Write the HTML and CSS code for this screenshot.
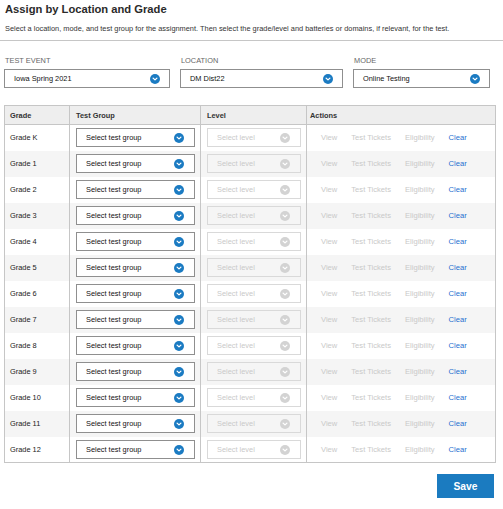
FILE: index.html
```html
<!DOCTYPE html>
<html lang="en">
<head>
<meta charset="utf-8">
<title>Assign by Location and Grade</title>
<link rel="stylesheet" href="styles.css">
</head>
<body>
<div class="page">
  <div class="header">
    <h1 class="title">Assign by Location and Grade</h1>
    <p class="intro">Select a location, mode, and test group for the assignment. Then select the grade/level and batteries or domains, if relevant, for the test.</p>
  </div>
  <div class="rule"></div>
  <div class="filters">
    <div class="field f-event">
      <div class="label">TEST EVENT</div>
      <div class="select"><span>Iowa Spring 2021</span><svg class="ico" viewBox="0 0 10 10"><circle cx="5" cy="5" r="5"/><path d="M3.1 4.1 L5 5.9 L6.9 4.1"/></svg></div>
    </div>
    <div class="field f-loc">
      <div class="label">LOCATION</div>
      <div class="select"><span>DM Dist22</span><svg class="ico" viewBox="0 0 10 10"><circle cx="5" cy="5" r="5"/><path d="M3.1 4.1 L5 5.9 L6.9 4.1"/></svg></div>
    </div>
    <div class="field f-mode">
      <div class="label">MODE</div>
      <div class="select"><span>Online Testing</span><svg class="ico" viewBox="0 0 10 10"><circle cx="5" cy="5" r="5"/><path d="M3.1 4.1 L5 5.9 L6.9 4.1"/></svg></div>
    </div>
  </div>

  <table class="grid">
    <colgroup>
      <col class="c-grade"><col class="c-group"><col class="c-level"><col class="c-actions">
    </colgroup>
    <thead>
      <tr><th>Grade</th><th>Test Group</th><th>Level</th><th class="th-actions">Actions</th></tr>
    </thead>
    <tbody id="rows"></tbody>
  </table>

  <div class="footer"><button class="save">Save</button></div>
</div>
<script>
  var grades = ["Grade K","Grade 1","Grade 2","Grade 3","Grade 4","Grade 5","Grade 6","Grade 7","Grade 8","Grade 9","Grade 10","Grade 11","Grade 12"];
  var ico = '<svg class="ico" viewBox="0 0 10 10"><circle cx="5" cy="5" r="5"/><path d="M3.1 4.1 L5 5.9 L6.9 4.1"/></svg>';
  var html = "";
  grades.forEach(function (g) {
    html += '<tr><td class="grade">' + g + '</td>' +
      '<td><div class="select sm"><span>Select test group</span>' + ico + '</div></td>' +
      '<td><div class="select sm disabled"><span>Select level</span>' + ico + '</div></td>' +
      '<td><div class="actions"><span class="act off">View</span><span class="act off">Test Tickets</span><span class="act off">Eligibility</span><span class="act on">Clear</span></div></td></tr>';
  });
  document.getElementById("rows").innerHTML = html;
</script>
</body>
</html>
```

FILE: styles.css
```css
* { box-sizing: border-box; }
html, body { margin: 0; padding: 0; background: #fff; }
body {
  font-family: "Liberation Sans", Arial, sans-serif;
  color: #222;
  width: 503px;
}
.header { padding: 0 5px; }
.title {
  margin: 0;
  font-size: 11.2px;
  line-height: 18px;
  font-weight: bold;
  color: #2a2a2a;
}
.intro {
  margin: 6px 0 0;
  font-size: 7.4px;
  line-height: 10px;
  color: #333;
}
.rule {
  margin-top: 6px;
  border-top: 1px solid #c6c6c6;
}
.filters {
  display: flex;
  gap: 10px;
  padding: 15px 4px 0;
}
.f-event { width: 166px; }
.f-loc { width: 163px; }
.f-mode { width: 137px; }
.label {
  font-size: 7.4px;
  line-height: 10px;
  color: #666;
  padding-left: 1px;
  margin-bottom: 3px;
}
.select {
  position: relative;
  height: 19px;
  border: 1px solid #8f8f8f;
  background: #fff;
  display: flex;
  align-items: center;
  padding-left: 9px;
  font-size: 7.4px;
  color: #111;
}
.select .ico {
  position: absolute;
  right: 9px;
  top: 4px;
  width: 10px;
  height: 10px;
}
.ico circle { fill: #1b7bc2; }
.ico path { fill: none; stroke: #fff; stroke-width: 1.3; stroke-linecap: round; stroke-linejoin: round; }

.grid {
  margin: 17px 0 0 4px;
  width: 491px;
  border-collapse: collapse;
  table-layout: fixed;
  border: 1px solid #c6c6c6;
}
.c-grade { width: 65px; }
.c-group { width: 131px; }
.c-level { width: 106px; }
.c-actions { width: 189px; }
.grid th {
  height: 19px;
  padding: 0 0 0 6px;
  background: #eeeeee;
  border: 1px solid #c6c6c6;
  text-align: left;
  font-size: 7.4px;
  font-weight: bold;
  color: #333;
}
.grid th:first-child { padding-left: 5px; }
.grid th.th-actions { padding-left: 3px; }
.grid td {
  height: 26px;
  padding: 0 5px 0 6px;
  border-left: 1px solid #c6c6c6;
  border-right: 1px solid #c6c6c6;
  font-size: 7.4px;
  vertical-align: middle;
}
.grid td.grade { padding-left: 5px; color: #222; }
.grid tbody tr:nth-child(even) td { background: #f5f5f5; }
.select.sm { padding-left: 9px; }
.select.sm .ico { right: 10px; }
.select.disabled {
  border-color: #d9d9d9;
  background: transparent;
  color: #c9c9c9;
}
.select.disabled .ico circle { fill: #d3d3d3; }
.actions {
  display: flex;
  gap: 14px;
  padding-left: 8px;
}
.act { font-size: 7.6px; }
.act.off { color: #c9c9c9; }
.act.on { color: #1f6fd0; }

.footer {
  display: flex;
  justify-content: flex-end;
  padding: 11px 9px 0 0;
}
.save {
  width: 57px;
  height: 24px;
  border: none;
  background: #1b7bc0;
  color: #fff;
  font-family: "Liberation Sans", Arial, sans-serif;
  font-weight: bold;
  font-size: 10.3px;
  padding: 0;
}
```
